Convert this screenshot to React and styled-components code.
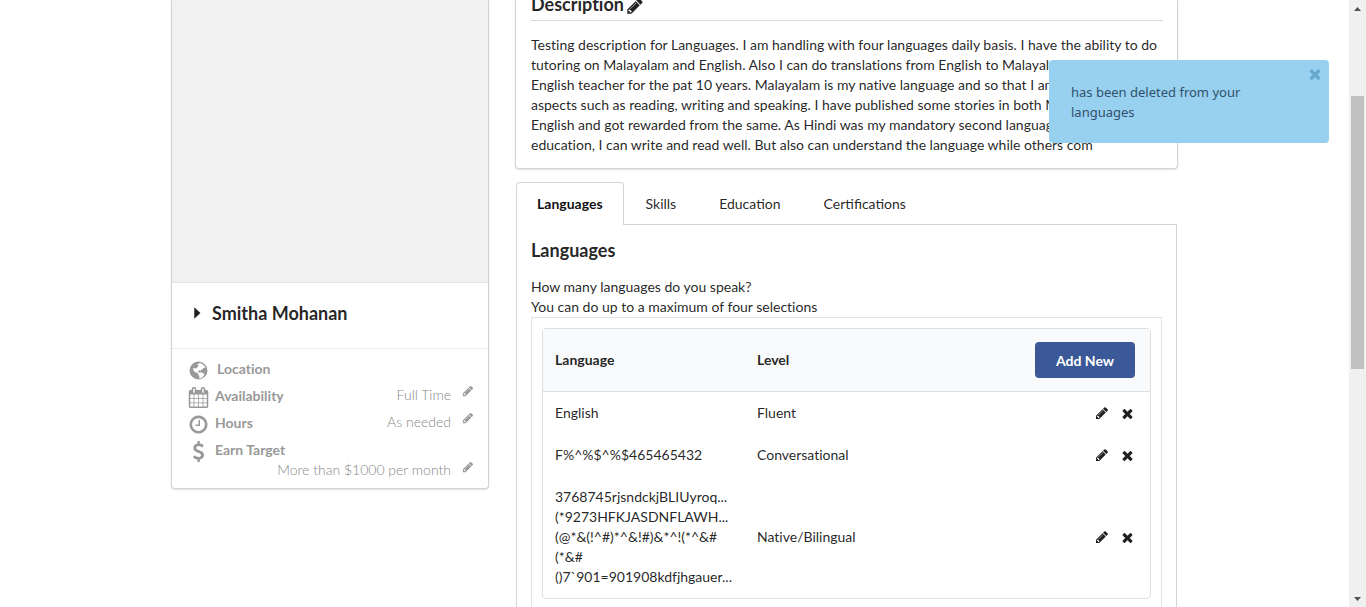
import React from "react";
import styled, { createGlobalStyle } from "styled-components";

const GlobalStyle = createGlobalStyle`
  *, *::before, *::after { box-sizing: border-box; }
  html, body { height: 100%; }
  body {
    margin: 0;
    overflow: hidden;
    background: #fff;
    color: rgba(0, 0, 0, 0.87);
    font-family: Lato, "Liberation Sans", Arial, sans-serif;
    font-size: 14px;
    line-height: 20px;
    font-variant-ligatures: none;
  }
  button { font-family: inherit; cursor: pointer; }
  h2, h3, p { margin: 0; }
`;

const ICONS = {
  pencil:
    "M491 1536l91-91-235-235-91 91v107h128v128h107zm523-928q0-22-22-22-10 0-17 7l-542 542q-7 7-7 17 0 22 22 22 10 0 17-7l542-542q7-7 7-17zm-54-192l416 416-832 832h-416v-416zm683 96q0 53-37 90l-166 166-416-416 166-165q36-38 90-38 53 0 91 38l235 234q37 39 37 91z",
  close:
    "M1490 1322q0 40-28 68l-136 136q-28 28-68 28t-68-28l-294-294-294 294q-28 28-68 28t-68-28l-136-136q-28-28-28-68t28-68l294-294-294-294q-28-28-28-68t28-68l136-136q28-28 68-28t68 28l294 294 294-294q28-28 68-28t68 28l136 136q28 28 28 68t-28 68l-294 294 294 294q28 28 28 68z",
  clock:
    "M1024 544v448q0 14-9 23t-23 9h-320q-14 0-23-9t-9-23v-64q0-14 9-23t23-9h224v-352q0-14 9-23t23-9h64q14 0 23 9t9 23zm416 352q0-148-73-273t-198-198-273-73-273 73-198 198-73 273 73 273 198 198 273 73 273-73 198-198 73-273zm224 0q0 209-103 385.500t-279.500 279.500-385.500 103-385.500-103-279.500-279.500-103-385.500 103-385.500 279.500-279.500 385.500-103 385.500 103 279.500 279.500 103 385.500z",
  calendar:
    "M192 1664h288v-288h-288v288zm352 0h320v-288h-320v288zm-352-352h288v-320h-288v320zm352 0h320v-320h-320v320zm-352-384h288v-288h-288v288zm736 736h320v-288h-320v288zm-384-736h320v-288h-320v288zm768 736h288v-288h-288v288zm-384-352h320v-320h-320v320zm-352-864v-288q0-13-9.500-22.500t-22.500-9.500h-64q-13 0-22.500 9.500t-9.500 22.500v288q0 13 9.500 22.500t22.500 9.500h64q13 0 22.500-9.500t9.500-22.500zm736 864h288v-320h-288v320zm-384-384h320v-288h-320v288zm384 0h288v-288h-288v288zm32-480v-288q0-13-9.500-22.500t-22.500-9.500h-64q-13 0-22.500 9.500t-9.500 22.500v288q0 13 9.500 22.500t22.500 9.500h64q13 0 22.500-9.500t9.500-22.500zm384-64v1280q0 52-38 90t-90 38h-1408q-52 0-90-38t-38-90v-1280q0-52 38-90t90-38h128v-96q0-66 47-113t113-47h64q66 0 113 47t47 113v96h384v-96q0-66 47-113t113-47h64q66 0 113 47t47 113v96h128q52 0 90 38t38 90z",
  dollar:
    "M1362 1185q0 153-99.500 263.500t-258.500 136.500v175q0 14-9 23t-23 9h-135q-13 0-22.500-9.500t-9.500-22.500v-175q-66-9-127.500-31t-101.500-44.500-74-48-46.500-37.500-17.500-18q-17-21-2-41l103-135q7-10 23-12 15-2 24 9l2 2q113 99 243 125 37 8 74 8 81 0 142.500-43t61.500-122q0-28-15-53t-33.500-42-58.500-37.500-66-32-80-32.500q-39-16-61.500-25t-61.500-26.500-62.500-31-56.500-35.500-53.500-42.500-43.500-49-35.500-58-21-66.500-8.500-78q0-138 98-242t255-134v-180q0-13 9.500-22.500t22.500-9.500h135q14 0 23 9t9 23v176q57 6 110.500 23t87 33.500 63.500 37.500 39 29 15 14q17 18 5 38l-81 146q-8 15-23 16-14 3-27-7-3-3-14.500-12t-39-26.500-58.500-32-74.500-26-85.500-11.500q-95 0-155 43t-60 111q0 26 8.500 48t29.500 41.500 39.500 33 56 31 60.500 27 70 27.500q53 20 81 31.500t76 35 75.500 42.500 62 50 53 63.500 31.500 76.500 13 94z",
  globe:
    "M896 128a768 768 0 1 0 0 1536a768 768 0 1 0 0-1536zM1000 260l180 50 160 110 110 150 40 130-90-40-110 50-60 110-120 20-40 90-110-50-90 50-30 80 110 60 140-30 190 70 130 100-80 150-120 130-170 90-90-40 20-150-90-130-20-120-130-60-150-50-90-130-60-90 30-110 130-20 70 70 80-90 90-60 60-120-60-90-120 30z",
  caret: "M620 320l620 576-620 576z",
};

const Svg = styled.svg`
  display: block;
  flex: none;
  fill: currentColor;
`;

function Icon({ name, size }) {
  return (
    <Svg width={size} height={size} viewBox="0 0 1792 1792" fillRule="evenodd" aria-hidden="true">
      <path d={ICONS[name]} />
    </Svg>
  );
}

const Page = styled.div`
  height: 100vh;
  overflow: hidden;
  padding: 0 34px 0 17px;
`;

const Container = styled.main`
  display: grid;
  grid-template-columns: minmax(0, 318fr) minmax(0, 663fr);
  gap: 26px;
  align-items: start;
  max-width: 1007px;
  margin: 0 auto;
`;

const Card = styled.section`
  background: #fff;
  border: 1px solid #d4d4d5;
  border-top: 0;
  border-radius: 0 0 4px 4px;
  box-shadow: 0 1px 2px rgba(0, 0, 0, 0.12);
`;

const Photo = styled.div`
  height: 282px;
  background: #f1f1f1;
`;

const NameBar = styled.div`
  display: flex;
  align-items: center;
  gap: 6px;
  height: 67px;
  padding: 0 16px 6px;
  border-top: 1px solid #e6e6e6;
  border-bottom: 1px solid #ececec;
`;

const Name = styled.h2`
  font-size: 18px;
  line-height: 24px;
  font-weight: 700;
`;

const Details = styled.div`
  padding: 6px 14px 9px 15px;
  color: #999;
`;

const Detail = styled.div`
  display: grid;
  grid-template-columns: 22px 1fr auto 12px;
  column-gap: 4px;
  align-items: center;
  height: 27px;
`;

const Term = styled.span`
  font-weight: 700;
  padding-left: ${(p) => (p.$inset ? 4 : 2)}px;
`;

const IconCell = styled.span`
  display: flex;
  justify-content: center;
  padding-top: 3px;
`;

const Value = styled.span`
  font-weight: 300;
  padding: 0 7px 2px 0;
  color: #888;
`;

const TargetValue = styled.div`
  display: flex;
  justify-content: flex-end;
  align-items: center;
  gap: 4px;
  height: 16px;
`;

const IconButton = styled.button`
  display: flex;
  align-items: center;
  padding: 0;
  border: 0;
  background: none;
  color: inherit;
`;

const RaisedButton = styled(IconButton)`
  padding-bottom: 9px;
`;

const DescriptionCard = styled(Card)`
  height: 169px;
  padding: 0 14px 0 15px;
  overflow: hidden;
`;

const DescriptionHead = styled.div`
  display: flex;
  align-items: flex-end;
  gap: 2px;
  height: 21px;
  margin-bottom: 14px;
  padding-bottom: 5px;
  border-bottom: 1px solid #d9dadb;
`;

const Heading = styled.h3`
  font-size: 18px;
  line-height: 22px;
  font-weight: 700;
`;

const Line = styled.span`
  display: block;
  white-space: nowrap;
`;

const TabbedSection = styled.section`
  margin: 13px 1px 0;
`;

const Tabs = styled.div`
  display: flex;
  border-bottom: 1px solid #d4d4d5;
`;

const Tab = styled.button`
  height: 43px;
  margin-bottom: -1px;
  padding: 0 20px 1px ${(p) => (p.$active ? 20 : 21)}px;
  border: 1px solid ${(p) => (p.$active ? "#d4d4d5" : "transparent")};
  border-bottom: 0;
  border-radius: 4px 4px 0 0;
  background: ${(p) => (p.$active ? "#fff" : "none")};
  color: ${(p) => (p.$active ? "rgba(0, 0, 0, 0.95)" : "rgba(0, 0, 0, 0.87)")};
  font-size: 14px;
  font-weight: ${(p) => (p.$active ? 700 : 400)};
`;

const Panel = styled.div`
  padding: 14px 14px 40px;
  border: 1px solid #d4d4d5;
  border-top: 0;
`;

const Question = styled.p`
  margin-top: 16px;
`;

const TableFrame = styled.div`
  padding: 10px 10px 40px;
  border: 1px solid #e3e3e4;
`;

const Table = styled.table`
  width: 100%;
  table-layout: fixed;
  border: 1px solid #dededf;
  border-radius: 4px;
  border-collapse: separate;
  border-spacing: 0;
`;

const HeadCell = styled.th`
  height: 63px;
  padding: 0 12px;
  background: #f9fafb;
  border-bottom: 1px solid #dededf;
  text-align: left;
  font-weight: 700;
  width: ${(p) => p.$width};

  &:last-child { padding-right: 15px; }
`;

const Cell = styled.td`
  padding: 11px 12px;
  overflow: hidden;
  vertical-align: middle;
`;

const AddButton = styled.button`
  display: block;
  height: 36px;
  margin-left: auto;
  padding: 0 21px;
  border: 0;
  border-radius: 4px;
  background: #3b5998;
  color: #fff;
  font-size: 14px;
  font-weight: 700;
`;

const Actions = styled.div`
  display: flex;
  justify-content: flex-end;
  gap: 11px;
  padding-right: 3px;
`;

const LanguageLine = styled.span`
  display: block;
  overflow: hidden;
  text-overflow: ellipsis;
  white-space: nowrap;
`;

const Toast = styled.div`
  position: fixed;
  top: 60px;
  right: 37px;
  width: 280px;
  padding: 22px 22px 21px;
  border-radius: 4px;
  background: #98d1f0;
  color: #31506b;
  font-family: "Noto Sans", sans-serif;
  font-size: 13px;
  line-height: 20px;
`;

const ToastClose = styled(IconButton)`
  position: absolute;
  top: 6px;
  right: 6px;
  color: #67a9cf;
`;

const ScrollTrack = styled.div`
  position: fixed;
  top: 0;
  right: 0;
  bottom: 0;
  display: flex;
  flex-direction: column;
  align-items: center;
  width: 17px;
  background: #f0f0f0;
  color: #505050;
`;

const ScrollArrow = styled.span`
  display: flex;
  align-items: center;
  justify-content: center;
  height: 17px;
`;

const ScrollSpace = styled.span`
  flex: ${(p) => p.$grow} 1 0;
`;

const ScrollThumb = styled.span`
  flex: 273 1 0;
  width: 13px;
  background: #c1c1c1;
`;

const DESCRIPTION = [
  "Testing description for Languages. I am handling with four languages daily basis. I have the ability to do",
  "tutoring on Malayalam and English. Also I can do translations from English to Malayalam. I am an",
  "English teacher for the pat 10 years. Malayalam is my native language and so that I am good in all",
  "aspects such as reading, writing and speaking. I have published some stories in both Malayalam and",
  "English and got rewarded from the same. As Hindi was my mandatory second language for",
  "education, I can write and read well. But also can understand the language while others com",
];

const DETAILS = [
  { icon: "globe", size: 21, label: "Location", inset: true },
  { icon: "calendar", size: 21, label: "Availability", value: "Full Time" },
  { icon: "clock", size: 21, label: "Hours", value: "As needed" },
  { icon: "dollar", size: 21, label: "Earn Target" },
];

const LANGUAGES = [
  { lines: ["English"], level: "Fluent" },
  { lines: ["F%^%$^%$465465432"], level: "Conversational" },
  {
    lines: [
      "3768745rjsndckjBLIUyroq...",
      "(*9273HFKJASDNFLAWH...",
      "(@*&(!^#)*^&!#)&*^!(*^&#",
      "(*&#",
      "()7`901=901908kdfjhgauer...",
    ],
    level: "Native/Bilingual",
  },
];

const TABS = ["Languages", "Skills", "Education", "Certifications"];

export default function App() {
  return (
    <Page>
      <GlobalStyle />
      <Container>
        <Card>
          <Photo />
          <NameBar>
            <Icon name="caret" size={18} />
            <Name>Smitha Mohanan</Name>
          </NameBar>
          <Details>
            {DETAILS.map((d) => (
              <Detail key={d.label}>
                <IconCell>
                  <Icon name={d.icon} size={d.size} />
                </IconCell>
                <Term $inset={d.inset}>{d.label}</Term>
                {d.value && <Value>{d.value}</Value>}
                {d.value && (
                  <RaisedButton aria-label={`Edit ${d.label}`}>
                    <Icon name="pencil" size={12} />
                  </RaisedButton>
                )}
              </Detail>
            ))}
            <TargetValue>
              <Value>More than $1000 per month</Value>
              <RaisedButton aria-label="Edit Earn Target">
                <Icon name="pencil" size={12} />
              </RaisedButton>
            </TargetValue>
          </Details>
        </Card>
        <div>
          <DescriptionCard>
            <DescriptionHead>
              <Heading>Description</Heading>
              <IconButton aria-label="Edit description">
                <Icon name="pencil" size={18} />
              </IconButton>
            </DescriptionHead>
            <p>
              {DESCRIPTION.map((line) => (
                <Line key={line}>{line}</Line>
              ))}
            </p>
          </DescriptionCard>
          <TabbedSection>
            <Tabs role="tablist">
              {TABS.map((tab, i) => (
                <Tab key={tab} role="tab" aria-selected={i === 0} $active={i === 0}>
                  {tab}
                </Tab>
              ))}
            </Tabs>
            <Panel role="tabpanel">
              <Heading>Languages</Heading>
              <Question>
                How many languages do you speak?
                <br />
                You can do up to a maximum of four selections
              </Question>
              <TableFrame>
                <Table>
                  <thead>
                    <tr>
                      <HeadCell $width="202px">Language</HeadCell>
                      <HeadCell $width="202px">Level</HeadCell>
                      <HeadCell>
                        <AddButton>Add New</AddButton>
                      </HeadCell>
                    </tr>
                  </thead>
                  <tbody>
                    {LANGUAGES.map((language) => (
                      <tr key={language.level}>
                        <Cell>
                          {language.lines.map((line) => (
                            <LanguageLine key={line}>{line}</LanguageLine>
                          ))}
                        </Cell>
                        <Cell>{language.level}</Cell>
                        <Cell>
                          <Actions>
                            <IconButton aria-label="Edit language">
                              <Icon name="pencil" size={14} />
                            </IconButton>
                            <IconButton aria-label="Delete language">
                              <Icon name="close" size={15} />
                            </IconButton>
                          </Actions>
                        </Cell>
                      </tr>
                    ))}
                  </tbody>
                </Table>
              </TableFrame>
            </Panel>
          </TabbedSection>
        </div>
      </Container>
      <Toast role="status">
        has been deleted from your languages
        <ToastClose aria-label="Close">
          <Icon name="close" size={16} />
        </ToastClose>
      </Toast>
      <ScrollTrack aria-hidden="true">
        <ScrollArrow>
          <svg width="7" height="4" viewBox="0 0 7 4">
            <path d="M0 4L3.500 0L7 4z" fill="currentColor" />
          </svg>
        </ScrollArrow>
        <ScrollSpace $grow={79} />
        <ScrollThumb />
        <ScrollSpace $grow={221} />
        <ScrollArrow>
          <svg width="7" height="4" viewBox="0 0 7 4">
            <path d="M0 0L3.500 4L7 0z" fill="currentColor" />
          </svg>
        </ScrollArrow>
      </ScrollTrack>
    </Page>
  );
}
